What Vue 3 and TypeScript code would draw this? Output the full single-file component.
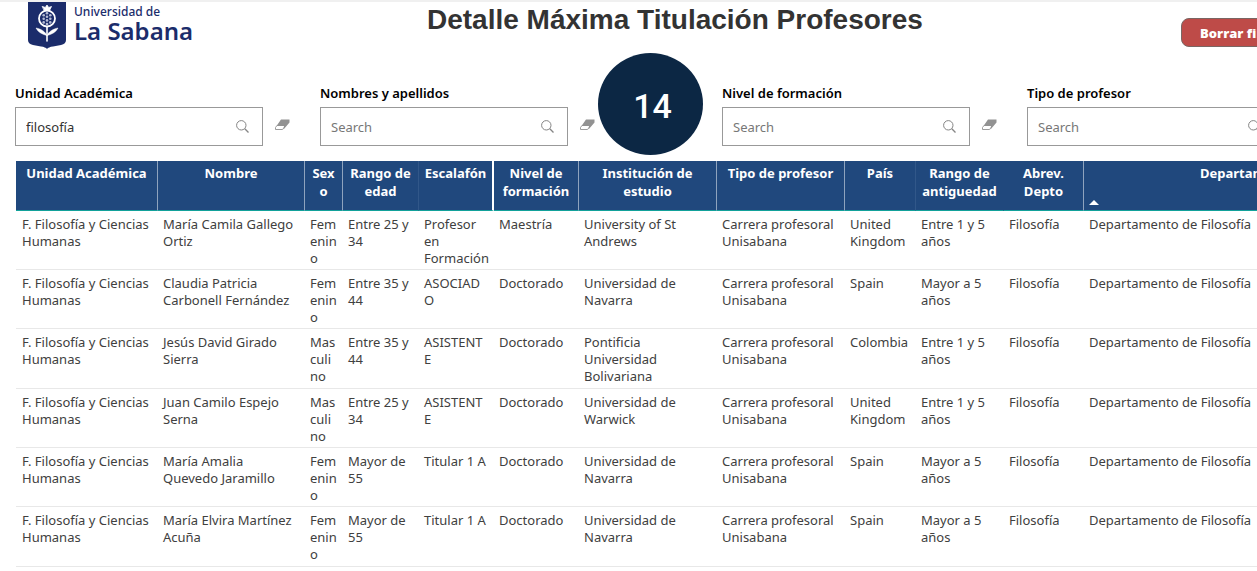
<script setup lang="ts">
import { ref } from 'vue'

interface Filter {
  id: string
  label: string
  value: string
}

interface Column {
  key: string
  title: string
  sorted?: boolean
}

const leftFilters = ref<Filter[]>([
  { id: 'unidad', label: 'Unidad Académica', value: 'filosofía' },
  { id: 'nombres', label: 'Nombres y apellidos', value: '' },
])

const rightFilters = ref<Filter[]>([
  { id: 'nivel', label: 'Nivel de formación', value: '' },
  { id: 'tipo', label: 'Tipo de profesor', value: '' },
])

const columns: Column[] = [
  { key: 'unidad', title: 'Unidad Académica' },
  { key: 'nombre', title: 'Nombre' },
  { key: 'sexo', title: 'Sex\no' },
  { key: 'edad', title: 'Rango de\nedad' },
  { key: 'escalafon', title: 'Escalafón' },
  { key: 'nivel', title: 'Nivel de\nformación' },
  { key: 'institucion', title: 'Institución de\nestudio' },
  { key: 'tipo', title: 'Tipo de profesor' },
  { key: 'pais', title: 'País' },
  { key: 'antiguedad', title: 'Rango de\nantiguedad' },
  { key: 'abrev', title: 'Abrev.\nDepto' },
  { key: 'departamento', title: 'Departamento', sorted: true },
]

const unit = 'F. Filosofía y Ciencias\nHumanas'
const career = 'Carrera profesoral\nUnisabana'
const dept = 'Departamento de Filosofía'
const female = 'Fem\nenin\no'
const male = 'Mas\nculi\nno'
const short = 'Entre 1 y 5\naños'
const long = 'Mayor a 5\naños'

const rows: string[][] = [
  [unit, 'María Camila Gallego\nOrtiz', female, 'Entre 25 y\n34', 'Profesor\nen\nFormación', 'Maestría', 'University of St\nAndrews', career, 'United\nKingdom', short, 'Filosofía', dept],
  [unit, 'Claudia Patricia\nCarbonell Fernández', female, 'Entre 35 y\n44', 'ASOCIAD\nO', 'Doctorado', 'Universidad de\nNavarra', career, 'Spain', long, 'Filosofía', dept],
  [unit, 'Jesús David Girado\nSierra', male, 'Entre 35 y\n44', 'ASISTENT\nE', 'Doctorado', 'Pontificia\nUniversidad\nBolivariana', career, 'Colombia', short, 'Filosofía', dept],
  [unit, 'Juan Camilo Espejo\nSerna', male, 'Entre 25 y\n34', 'ASISTENT\nE', 'Doctorado', 'Universidad de\nWarwick', career, 'United\nKingdom', short, 'Filosofía', dept],
  [unit, 'María Amalia\nQuevedo Jaramillo', female, 'Mayor de\n55', 'Titular 1 A', 'Doctorado', 'Universidad de\nNavarra', career, 'Spain', long, 'Filosofía', dept],
  [unit, 'María Elvira Martínez\nAcuña', female, 'Mayor de\n55', 'Titular 1 A', 'Doctorado', 'Universidad de\nNavarra', career, 'Spain', long, 'Filosofía', dept],
]

function clearAll(): void {
  for (const f of [...leftFilters.value, ...rightFilters.value]) f.value = ''
}
</script>

<template>
  <main class="report">
    <header class="top">
      <div class="brand">
        <svg class="shield" viewBox="0 0 38 47" aria-hidden="true">
          <path d="M0 0H38V38Q38 42 33 43L25 44.500Q20.500 45 19 47Q17.500 45 13 44.500L5 43Q0 42 0 38Z" fill="#1b2c6b" />
          <g fill="none" stroke="#fff" stroke-linecap="round" stroke-linejoin="round">
            <path d="M14.500 4.500L17.300 5.500L19 3L20.700 5.500L23.500 4.500L21.500 8.500H16.500Z" fill="#fff" stroke-width="0.800" />
            <circle cx="19" cy="16.500" r="8" stroke-width="1.800" />
            <path d="M19 25V39" stroke-width="1.600" />
            <path d="M18.700 33.500C17.500 29.500 13 27 8 26C10 30 13.500 32 18.700 33.500ZM19.300 33.500C20.500 29.500 25 27 30 26C28 30 24.500 32 19.300 33.500Z" fill="#fff" stroke-width="0.500" />
          </g>
          <g fill="#b4bbd4">
            <circle cx="19" cy="11.200" r="1.300" />
            <circle cx="15.700" cy="13.200" r="1.300" /><circle cx="22.300" cy="13.200" r="1.300" />
            <circle cx="19" cy="14.800" r="1.300" />
            <circle cx="15.700" cy="16.800" r="1.300" /><circle cx="22.300" cy="16.800" r="1.300" />
            <circle cx="19" cy="18.400" r="1.300" />
            <circle cx="15.700" cy="20.400" r="1.300" /><circle cx="22.300" cy="20.400" r="1.300" />
            <circle cx="19" cy="22" r="1.300" />
          </g>
        </svg>
        <div class="brand-text">
          <span class="brand-small">Universidad de</span>
          <span class="brand-large">La Sabana</span>
        </div>
      </div>
      <h1 class="title">Detalle Máxima Titulación Profesores</h1>
      <button class="clear" type="button" @click="clearAll">Borrar filtros</button>
    </header>

    <section class="filters">
      <template v-for="(group, g) in [leftFilters, rightFilters]" :key="g">
        <output v-if="g === 1" class="count">14</output>
        <div class="group">
          <div v-for="f in group" :key="f.id" class="filter">
            <label :for="f.id">{{ f.label }}</label>
            <div class="line">
              <div class="box">
                <input :id="f.id" v-model="f.value" type="text" placeholder="Search" />
                <svg class="lens" viewBox="0 0 13 13" aria-hidden="true">
                  <circle cx="5.300" cy="5.300" r="4.700" fill="none" stroke="#858585" />
                  <path d="M8.800 8.800L12.500 12.500" stroke="#858585" stroke-width="1.300" />
                </svg>
              </div>
              <button class="erase" type="button" :aria-label="'Borrar ' + f.label" @click="f.value = ''">
                <svg viewBox="0 0 15 12" aria-hidden="true">
                  <path d="M6 0.500H14.500V3.500L8.500 10.500L9 7H1.500Z" fill="#929292" />
                  <path d="M2 6.500L0.500 8.500V10.500H7.500L9.500 8V6.500" fill="none" stroke="#929292" stroke-width="0.900" />
                </svg>
              </button>
            </div>
          </div>
        </div>
      </template>
    </section>

    <table class="grid">
      <colgroup>
        <col v-for="c in columns" :key="c.key" :class="'c-' + c.key" />
      </colgroup>
      <thead>
        <tr>
          <th v-for="c in columns" :key="c.key" scope="col" :class="'h-' + c.key" :aria-sort="c.sorted ? 'ascending' : undefined">
            {{ c.title }}<span v-if="c.sorted" class="arrow"></span>
          </th>
        </tr>
      </thead>
      <tbody>
        <tr v-for="(row, r) in rows" :key="r">
          <td v-for="(cell, i) in row" :key="i">{{ cell }}</td>
        </tr>
      </tbody>
    </table>
  </main>
</template>

<style>
body {
  margin: 0;
  background: #fff;
}
</style>

<style scoped>
.report {
  box-sizing: border-box;
  overflow: hidden;
  border-top: 2px solid #f0f0f0;
  padding: 0 0 4px 15px;
  font-family: "Noto Sans", "Open Sans", sans-serif;
  font-size: 13px;
  color: #333;
}
.top {
  display: grid;
  grid-template-columns: 412px 1fr 76px;
  align-items: start;
  height: 51px;
}
.brand {
  display: flex;
  gap: 8px;
  padding-left: 13px;
}
.shield {
  width: 38px;
  height: 47px;
}
.brand-text {
  display: flex;
  flex-direction: column;
  color: #1b2c6b;
  white-space: nowrap;
}
.brand-small {
  font-size: 12px;
  font-weight: 500;
  line-height: 20px;
}
.brand-large {
  font-size: 24px;
  font-weight: 600;
  line-height: 18px;
}
.title {
  margin: 0;
  font: bold 28px/36px "Liberation Sans", Arial, sans-serif;
  white-space: nowrap;
}
.clear {
  width: 150px;
  height: 29px;
  margin-top: 16px;
  padding: 0 18px;
  border: 1px solid #7a6663;
  border-radius: 8px;
  background: #be4b48;
  color: #fff;
  font: 800 13px/20px "Open Sans", sans-serif;
  text-align: left;
  white-space: nowrap;
}
.filters {
  display: flex;
  align-items: flex-start;
  height: 108px;
}
.group {
  display: flex;
  flex: none;
  gap: 30px;
  padding-top: 30px;
}
.filter label {
  display: block;
  color: #000;
  font-weight: 600;
  line-height: 20px;
}
.line {
  display: flex;
  align-items: center;
  gap: 12px;
  margin-top: 4px;
}
.box {
  box-sizing: border-box;
  display: flex;
  align-items: center;
  width: 248px;
  height: 39px;
  padding: 0 13px 0 10px;
  border: 1px solid #999;
}
.box input {
  flex: 1;
  min-width: 0;
  padding: 0;
  border: 0;
  outline: 0;
  background: none;
  color: #333;
  font: inherit;
}
.box input::placeholder {
  color: #777;
  opacity: 1;
}
.lens {
  width: 13px;
  height: 13px;
}
.erase {
  width: 15px;
  height: 12px;
  margin-bottom: 4px;
  padding: 0;
  border: 0;
  background: none;
}
.erase svg {
  display: block;
}
.count {
  box-sizing: border-box;
  flex: none;
  width: 105px;
  height: 102px;
  margin: 0 19px 0 3px;
  padding-left: 4px;
  border-radius: 50%;
  background: #0c2744;
  color: #fff;
  font: 500 34px/106px Roboto, sans-serif;
  text-align: center;
}
.grid {
  width: 1396px;
  margin-left: 1px;
  border-spacing: 0;
  table-layout: fixed;
}
.c-unidad { width: 142px; }
.c-nombre { width: 147px; }
.c-sexo { width: 38px; }
.c-edad { width: 76px; }
.c-escalafon { width: 75px; }
.c-nivel { width: 85px; }
.c-institucion { width: 138px; }
.c-tipo { width: 128px; }
.c-pais { width: 71px; }
.c-antiguedad { width: 88px; }
.c-abrev { width: 80px; }
.c-departamento { width: 328px; }
th,
td {
  box-sizing: border-box;
  vertical-align: top;
  white-space: pre;
}
th {
  position: relative;
  height: 50px;
  padding: 3px 0 0;
  border-right: 1px solid #8ea3be;
  border-bottom: 1px solid #12a19a;
  background: #20487d;
  color: #fff;
  font-weight: 700;
  line-height: 18px;
  text-align: center;
}
.h-edad,
.h-pais {
  border-right-color: #315789;
}
.h-antiguedad {
  border-right-color: #20487d;
}
.h-escalafon {
  border-right: 2px solid #fff;
}
.arrow {
  position: absolute;
  bottom: 5px;
  left: 5px;
  border: 5px solid transparent;
  border-top: 0;
  border-bottom-color: #fff;
}
td {
  height: 59px;
  padding: 5px 0 2px 5px;
  border-bottom: 1px solid #e8e8e8;
  color: #404040;
  line-height: 17px;
}
td:first-child {
  padding-left: 6px;
}
tr:nth-child(3n) td {
  height: 60px;
}
</style>
